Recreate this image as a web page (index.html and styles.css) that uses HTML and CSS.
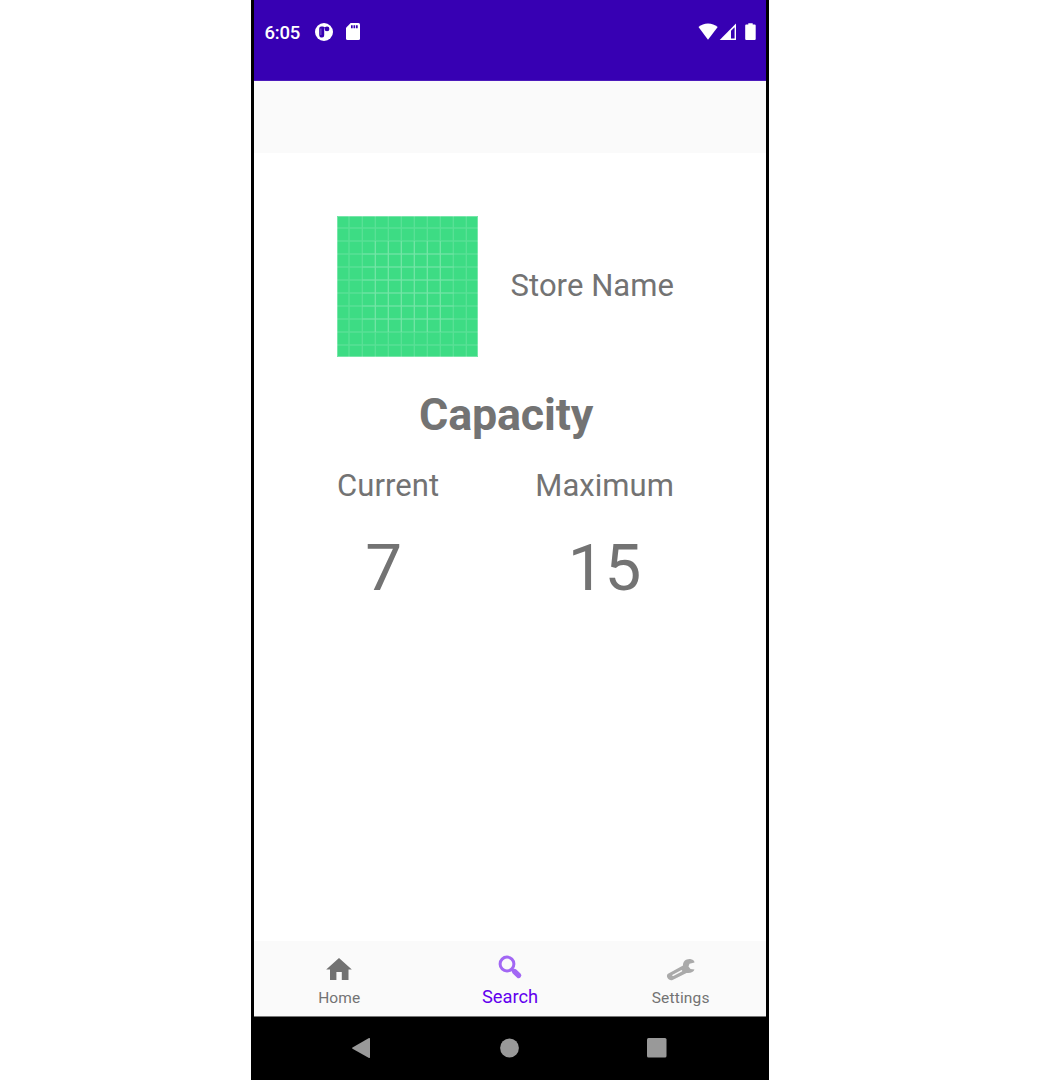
FILE: index.html
```html
<!DOCTYPE html>
<html lang="en">
<head>
<meta charset="utf-8">
<title>Store capacity</title>
<link rel="stylesheet" href="styles.css">
</head>
<body>
<div class="phone">
  <header class="status">
    <span class="clock">6:05</span>
    <svg class="app-icon" width="18" height="18" viewBox="0 0 18 18"><circle cx="9" cy="9" r="9" fill="#fff"/><path d="M6.200 3.400h1.600q1.400 0 1.400 1.400v7.400q0 2.400-2 2.400-3 0-3-3.200v-6q0-2 2-2z" fill="#3700b3"/><path d="M5.900 5.500v6.500" stroke="#fff" stroke-width=".7" opacity=".5"/><circle cx="12" cy="5.900" r="2.400" fill="#3700b3"/><path d="M9 4.200h1.500v1H9z" fill="#3700b3"/></svg>
    <svg class="sd-icon" width="14" height="17" viewBox="0 0 14 17"><path d="M4.700 0H12.500Q14 0 14 1.500v14Q14 17 12.500 17h-11Q0 17 0 15.500V4.700z" fill="#fff"/><path d="M5 2.300h1.700v3H5zM7.500 2.300h1.700v3H7.500zM10 2.300h1.700v3H10z" fill="#3700b3"/></svg>
    <svg class="wifi-icon" width="20" height="17" viewBox="0 0 20 17"><path d="M.500 4Q4.500.500 10 .500T19.700 4L10 16.800z" fill="#fff"/></svg>
    <svg class="signal-icon" width="17" height="17" viewBox="0 0 17 17"><path d="M17 .5V17H.700z" fill="#fff"/><path d="M12 7.800 15.600 4.200v11.300H12z" fill="#3700b3"/></svg>
    <svg class="battery-icon" width="11" height="17" viewBox="0 0 11 17"><path d="M3.300.300h4.400v1.300h2q1 0 1 1V16q0 1-1 1H1.200q-1 0-1-1V2.600q0-1 1-1h2.100z" fill="#fff"/></svg>
  </header>
  <div class="toolbar"></div>
  <main class="content">
    <section class="store">
      <svg width="141" height="141" viewBox="0 0 141 141">
        <path fill="#3ddc84" d="M0 0h141v141H0z"/>
        <g fill="none" stroke="#fff">
          <path stroke-opacity=".14" stroke-width="1.400" d="M12 0v141M25.300 0v141M38.300 0v141M51.300 0v141M64.300 0v141M77.300 0v141M90.300 0v141M103.300 0v141M116.300 0v141M129.300 0v141M0 12h141M0 25h141M0 38h141M0 51h141M0 64h141M0 77h141M0 90h141M0 103h141M0 116h141M0 129h141"/>
          <path stroke-opacity=".17" stroke-width="1.200" d="M38.300 25v91M51.300 25v91M64.300 25v91M77.300 25v91M90.300 25v91M103.300 25v91M25 38h92M25 51h92M25 64h92M25 77h92M25 90h92M25 103h92"/>
          <path stroke-opacity=".3" d="M.5.5h140v140H.5z"/>
        </g>
      </svg>
      <span class="label store-name">Store Name</span>
    </section>
    <h1 class="title">Capacity</h1>
    <section class="figures">
      <div class="figure"><span class="label">Current</span><span class="value current">7</span></div>
      <div class="figure"><span class="label">Maximum</span><span class="value">15</span></div>
    </section>
  </main>
  <nav class="tabs">
    <a class="tab">
      <svg width="32" height="32" viewBox="0 0 32 32"><path d="M16 6 28.800 17.600H25.500V28h-6.700v-8h-5.400v8H7V17.600H3.200z" fill="#727272"/></svg>
      <span>Home</span>
    </a>
    <a class="tab active">
      <svg width="32" height="32" viewBox="0 0 32 32"><circle cx="13" cy="12" r="6.900" fill="none" stroke="#a267f4" stroke-width="3"/><path d="m18 17.500 2 2" stroke="#a267f4" stroke-width="3"/><path d="m20.500 19.500 4.200 4" stroke="#a267f4" stroke-width="5.200" stroke-linecap="round"/></svg>
      <span>Search</span>
    </a>
    <a class="tab">
      <svg width="32" height="32" viewBox="1 -.5 32 32"><path d="M4 21.200 19 13C18.800 9 22 6 27 6.700Q30.500 7.500 30.500 10L25.500 11.200 24.500 14l2 2.400 4 .6Q29 21 22.500 20.400L8.500 27.500C5 29 1 23.500 4 21.200z" fill="#aaa"/><path d="m9 22.800 8.500-4.500" stroke="#fafafa" stroke-width="1.500" stroke-linecap="round"/></svg>
      <span>Settings</span>
    </a>
  </nav>
  <footer class="system-nav">
    <svg width="20" height="22" viewBox="0 0 20 22"><path d="M1.500 10.500 18 1q1-.4 1 .7v18.600q0 1.100-1 .7L1.500 11.700q-1-.6 0-1.200z" fill="#999"/></svg>
    <svg width="20" height="20" viewBox="0 0 20 20"><circle cx="10.500" cy="10" r="9.400" fill="#999"/></svg>
    <svg width="20" height="20" viewBox="0 0 20 20"><rect width="19.500" height="19.500" rx="1.500" fill="#999"/></svg>
  </footer>
</div>
</body>
</html>
```
FILE: styles.css
```css
* { box-sizing: border-box; }
body { margin: 0; background: #fff; font-family: Roboto, sans-serif; color: #737373; }
svg { display: block; flex: none; }
.phone { width: 518px; height: 1080px; margin-left: 251px; border: solid #000; border-width: 0 3px; display: flex; flex-direction: column; }
.status { height: 81px; background: #3700b3; color: #fff; display: flex; align-items: flex-start; padding: 23px 10px 0 10.500px; border-bottom: 1px solid #4c1abb; }
.clock { width: 50.500px; font-size: 18.500px; font-weight: 500; line-height: 21px; letter-spacing: -.2px; }
.sd-icon { margin-left: 13px; }
.wifi-icon { margin-left: auto; }
.signal-icon { margin-left: 1px; }
.battery-icon { margin-left: 9px; }
.toolbar { height: 72px; background: #fafafa; }
.content { flex: 1; padding: 63px 92px 0 83px; }
.store { display: flex; align-items: center; justify-content: space-between; height: 141px; }
.label { font-size: 31px; line-height: 36px; letter-spacing: .06px; white-space: nowrap; }
.store-name { margin-bottom: 2px; }
.title { margin: 30px 0 0 82px; font-size: 44.800px; line-height: 56px; font-weight: 700; letter-spacing: -.15px; }
.figures { display: flex; justify-content: space-between; margin-top: 25px; }
.figure { display: flex; flex-direction: column; align-items: center; }
.value { margin-top: 24px; font-size: 65.500px; line-height: 80px; letter-spacing: 0; }
.current { margin-right: 9px; }
.tabs { height: 76px; background: #fafafa; display: grid; grid-template-columns: repeat(3, 1fr); border-bottom: 1px solid #777; }
.tab { display: flex; flex-direction: column; align-items: center; padding-top: 11px; font-size: 15.500px; line-height: 20px; letter-spacing: .16px; }
.tab span { margin-top: 4px; }
.active { color: #6200ee; font-size: 18.300px; letter-spacing: 0; }
.active span { margin-top: 3px; }
.system-nav { height: 63px; background: #000; display: flex; align-items: center; justify-content: space-between; padding: 0 99px 2px 97px; }
```
